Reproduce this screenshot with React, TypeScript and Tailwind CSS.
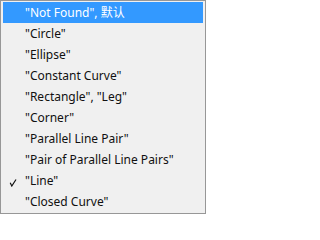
import React from "react";

const items = [
  '"Not Found", 默认',
  '"Circle"',
  '"Ellipse"',
  '"Constant Curve"',
  '"Rectangle", "Leg"',
  '"Corner"',
  '"Parallel Line Pair"',
  '"Pair of Parallel Line Pairs"',
  '"Line"',
  '"Closed Curve"',
];

export default function App() {
  return (
    <div className="w-[206px] h-[214px] bg-[#f0f0f0] border border-[#979797] px-[2px] py-[1px] box-border overflow-hidden">
      <div className="flex flex-col">
        {items.map((t, i) => {
          const active = i === 0;
          const checked = i === 8;
          return (
            <div
              key={i}
              className={
                "h-[21px] flex items-center relative " +
                (active ? "bg-[#3399ff] text-white" : "text-[#111111]")
              }
            >
              {checked && (
                <svg className="absolute left-[6px] top-[9px]" width="8" height="8" viewBox="0 0 8 8">
                  <path d="M1.2 3.8 L2.8 7 L7 0.5" fill="none" stroke="#111" strokeWidth="1.2" />
                </svg>
              )}
              <span
                className="pl-[22px] text-[12px] leading-none whitespace-nowrap"
                style={{ fontFamily: '"Noto Sans", "Noto Sans CJK SC", sans-serif' }}
              >
                {t}
              </span>
            </div>
          );
        })}
      </div>
    </div>
  );
}
